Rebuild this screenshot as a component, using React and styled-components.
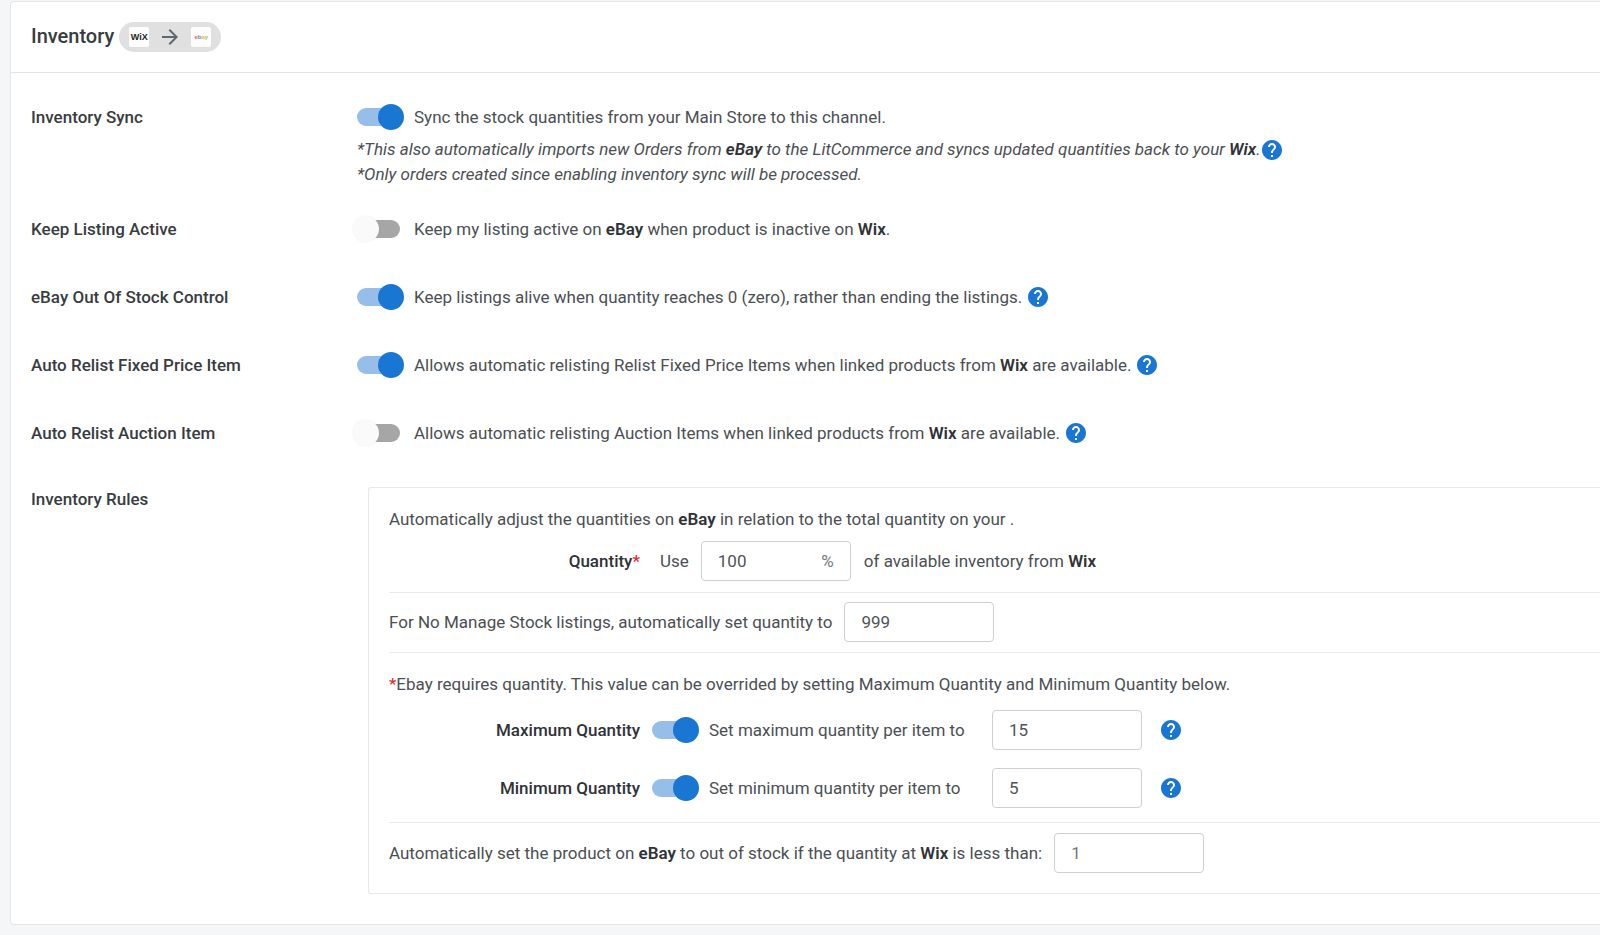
import React, { useState } from "react";
import styled, { createGlobalStyle } from "styled-components";
import { MdArrowForward, MdHelp } from "react-icons/md";

const GlobalStyle = createGlobalStyle`
  * {
    box-sizing: border-box;
  }

  body {
    margin: 0;
    min-height: 100vh;
    background-color: #f4f6f8;
    font-family: Roboto, "Liberation Sans", sans-serif;
    font-size: 17px;
    line-height: 24px;
    color: #4b4f53;
    overflow-x: hidden;
  }

  b {
    font-weight: 600;
    color: #2f3236;
  }
`;

const Page = styled.main`
  padding: 1px 0 10px 10px;
`;

const Card = styled.section`
  background-color: #fff;
  border: 1px solid #e4e7e9;
  border-right: none;
  border-radius: 4px 0 0 4px;
`;

const CardHeader = styled.header`
  display: flex;
  align-items: center;
  gap: 5px;
  height: 71px;
  padding: 0 20px;
  border-bottom: 1px solid #e1e5e6;
`;

const Title = styled.h1`
  margin: 0;
  padding-bottom: 3px;
  font-size: 20px;
  font-weight: 500;
  color: #383c40;
`;

const ChannelPill = styled.div`
  display: flex;
  align-items: center;
  justify-content: space-between;
  width: 102px;
  height: 30px;
  padding: 0 10px;
  border-radius: 15px;
  background-color: #e0e0e0;
  color: #5f6870;
`;

const LogoTile = styled.span`
  display: flex;
  align-items: center;
  justify-content: center;
  width: 20px;
  height: 20px;
  border-radius: 2px;
  background-color: #fdfdfd;
  font-family: "Liberation Sans", sans-serif;
  font-size: ${(props) => props.$size}px;
  font-weight: 700;
  line-height: 1;
  color: #222;
`;

const Letter = styled.span`
  color: ${(props) => props.$color};
`;

const CardBody = styled.div`
  padding: 32px 0 30px 20px;
`;

const SettingList = styled.div`
  display: flex;
  flex-direction: column;
  gap: 30px;
`;

const SettingRow = styled.div`
  display: grid;
  grid-template-columns: 326px 1fr;
  min-height: 38px;
`;

const RulesRow = styled.div`
  display: grid;
  grid-template-columns: 337px 1fr;
  margin-top: 28px;
`;

const SettingName = styled.h2`
  margin: 0;
  font-size: 17px;
  font-weight: 500;
  color: #383c40;
`;

const SwitchLine = styled.div`
  display: flex;
  align-items: center;
  height: 24px;
`;

const SwitchLabel = styled.label`
  margin-right: 4px;
`;

const Toggle = styled.input`
  appearance: none;
  position: relative;
  flex: none;
  width: 43px;
  height: 18px;
  margin: 0 14px 0 0;
  border-radius: 9px;
  background-color: #a6a6a6;
  cursor: pointer;

  &::before {
    content: "";
    position: absolute;
    top: -4px;
    left: -4px;
    width: 26px;
    height: 26px;
    border-radius: 50%;
    background-color: #fafafa;
    box-shadow: 0 0 2px rgba(0, 0, 0, 0.08);
  }

  &:checked {
    background-color: #97bde9;
  }

  &:checked::before {
    left: 21px;
    background-color: #1976d2;
    box-shadow: none;
  }
`;

const Notes = styled.div`
  margin-top: 8px;
  font-style: italic;
  line-height: 25px;
`;

const NoteLine = styled.p`
  display: flex;
  align-items: center;
  height: 25px;
  margin: 0;
`;

const HelpButton = styled.button`
  display: flex;
  flex: none;
  padding: 0;
  border: none;
  background: none;
  color: #1976d2;
  cursor: pointer;
`;

const RulesPanel = styled.div`
  border: 1px solid #e6e8e9;
  border-right: none;
  border-radius: 3px 0 0 3px;
  padding: 19px 0 20px 20px;
`;

const RuleGroup = styled.div`
  padding: ${(props) => props.$pad};

  & + & {
    border-top: 1px solid #e8eaeb;
  }
`;

const RuleText = styled.p`
  margin: 0;
`;

const Required = styled.span`
  color: #e5252a;
`;

const RuleLine = styled.div`
  display: flex;
  align-items: center;
  height: 40px;
  margin-top: ${(props) => props.$top || 0}px;
`;

const RuleLabel = styled.label`
  flex: none;
  width: 251px;
  margin-right: ${(props) => props.$gap}px;
  text-align: right;
  font-weight: 500;
  color: #2f3236;
`;

const LimitLabel = styled.label`
  width: 283px;
`;

const Field = styled.span`
  display: flex;
  align-items: center;
  flex: none;
  width: 150px;
  height: 40px;
  margin: 0 ${(props) => props.$after || 0}px 0 ${(props) => props.$before || 0}px;
  padding: 0 16px;
  border: 1px solid #cdcfd1;
  border-radius: 4px;
`;

const FieldInput = styled.input`
  flex: 1;
  min-width: 0;
  padding: 0;
  border: none;
  outline: none;
  background: none;
  font: inherit;
  color: ${(props) => (props.$muted ? "#73777b" : "#4f5357")};
`;

const FieldUnit = styled.span`
  color: #75797d;
`;

const Help = ({ label }) => (
  <HelpButton type="button" aria-label={label}>
    <MdHelp size={24} />
  </HelpButton>
);

const NumberField = ({ id, start, unit, muted, before, after }) => {
  const [value, setValue] = useState(start);
  return (
    <Field $before={before} $after={after}>
      <FieldInput
        id={id}
        inputMode="numeric"
        $muted={muted}
        value={value}
        onChange={(e) => setValue(e.target.value)}
      />
      {unit && <FieldUnit>{unit}</FieldUnit>}
    </Field>
  );
};

const Setting = ({ id, name, on, text, help, children }) => (
  <SettingRow>
    <SettingName>{name}</SettingName>
    <div>
      <SwitchLine>
        <Toggle type="checkbox" role="switch" id={id} defaultChecked={on} />
        <SwitchLabel htmlFor={id}>{text}</SwitchLabel>
        {help && <Help label={`About ${name}`} />}
      </SwitchLine>
      {children}
    </div>
  </SettingRow>
);

const LimitRule = ({ id, name, text, value, top }) => (
  <RuleLine $top={top}>
    <RuleLabel htmlFor={id} $gap={12}>
      {name}
    </RuleLabel>
    <Toggle type="checkbox" role="switch" id={id} defaultChecked />
    <LimitLabel htmlFor={`${id}-value`}>{text}</LimitLabel>
    <NumberField id={`${id}-value`} start={value} after={17} />
    <Help label={`About ${name}`} />
  </RuleLine>
);

const Header = () => (
  <CardHeader>
    <Title>Inventory</Title>
    <ChannelPill>
      <LogoTile $size={9}>WiX</LogoTile>
      <MdArrowForward size={24} />
      <LogoTile $size={6}>
        <Letter $color="#e5636c">e</Letter>
        <Letter $color="#6f80d0">b</Letter>
        <Letter $color="#eeb540">a</Letter>
        <Letter $color="#a3c254">y</Letter>
      </LogoTile>
    </ChannelPill>
  </CardHeader>
);

const Rules = () => (
  <RulesRow>
    <SettingName>Inventory Rules</SettingName>
    <RulesPanel>
      <RuleGroup $pad="0 0 11px">
        <RuleText>
          Automatically adjust the quantities on <b>eBay</b> in relation to the
          total quantity on your .
        </RuleText>
        <RuleLine $top={10}>
          <RuleLabel htmlFor="quantity" $gap={20}>
            Quantity<Required>*</Required>
          </RuleLabel>
          <span>Use</span>
          <NumberField
            id="quantity"
            start="100"
            unit="%"
            before={12}
            after={13}
          />
          <span>
            of available inventory from <b>Wix</b>
          </span>
        </RuleLine>
      </RuleGroup>
      <RuleGroup $pad="9px 0 10px">
        <RuleLine>
          <label htmlFor="no-manage">
            For No Manage Stock listings, automatically set quantity to
          </label>
          <NumberField id="no-manage" start="999" before={12} />
        </RuleLine>
      </RuleGroup>
      <RuleGroup $pad="19px 0 14px">
        <RuleText>
          <Required>*</Required>Ebay requires quantity. This value can be
          overrided by setting Maximum Quantity and Minimum Quantity below.
        </RuleText>
        <LimitRule
          id="max"
          name="Maximum Quantity"
          text="Set maximum quantity per item to"
          value="15"
          top={14}
        />
        <LimitRule
          id="min"
          name="Minimum Quantity"
          text="Set minimum quantity per item to"
          value="5"
          top={18}
        />
      </RuleGroup>
      <RuleGroup $pad="10px 0 0">
        <RuleLine>
          <label htmlFor="threshold">
            Automatically set the product on <b>eBay</b> to out of stock if the
            quantity at <b>Wix</b> is less than:
          </label>
          <NumberField id="threshold" start="1" before={12} muted />
        </RuleLine>
      </RuleGroup>
    </RulesPanel>
  </RulesRow>
);

const App = () => {
  return (
    <>
      <GlobalStyle />
      <Page>
        <Card>
          <Header />
          <CardBody>
            <SettingList>
              <Setting
                id="sync"
                name="Inventory Sync"
                on
                text="Sync the stock quantities from your Main Store to this channel."
              >
                <Notes>
                  <NoteLine>
                    <span>
                      *This also automatically imports new Orders from{" "}
                      <b>eBay</b> to the LitCommerce and syncs updated
                      quantities back to your <b>Wix</b>.
                    </span>
                    <Help label="About order import" />
                  </NoteLine>
                  <NoteLine>
                    *Only orders created since enabling inventory sync will be
                    processed.
                  </NoteLine>
                </Notes>
              </Setting>
              <Setting
                id="keep-active"
                name="Keep Listing Active"
                text={
                  <span>
                    Keep my listing active on <b>eBay</b> when product is
                    inactive on <b>Wix</b>.
                  </span>
                }
              />
              <Setting
                id="stock-control"
                name="eBay Out Of Stock Control"
                on
                help
                text="Keep listings alive when quantity reaches 0 (zero), rather than ending the listings."
              />
              <Setting
                id="relist-fixed"
                name="Auto Relist Fixed Price Item"
                on
                help
                text={
                  <span>
                    Allows automatic relisting Relist Fixed Price Items when
                    linked products from <b>Wix</b> are available.
                  </span>
                }
              />
              <Setting
                id="relist-auction"
                name="Auto Relist Auction Item"
                help
                text={
                  <span>
                    Allows automatic relisting Auction Items when linked
                    products from <b>Wix</b> are available.
                  </span>
                }
              />
            </SettingList>
            <Rules />
          </CardBody>
        </Card>
      </Page>
    </>
  );
};

export default App;
